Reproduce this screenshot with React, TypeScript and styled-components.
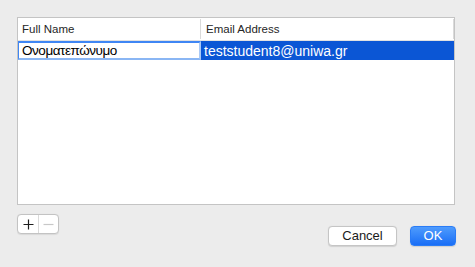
import React from 'react';
import styled, { createGlobalStyle } from 'styled-components';

const GlobalStyle = createGlobalStyle`
  html, body {
    margin: 0;
    padding: 0;
    background: #ececec;
  }
  body {
    font-family: "Liberation Sans", Arial, sans-serif;
    -webkit-font-smoothing: antialiased;
  }
`;

const Sheet = styled.div`
  width: 475px;
  height: 267px;
  box-sizing: border-box;
  padding: 17px 20px 0 17px;
  background: #ececec;
  display: flex;
  flex-direction: column;
`;

const Table = styled.div`
  height: 188px;
  box-sizing: border-box;
  border: 1px solid #c4c4c4;
  background: #ffffff;
  display: flex;
  flex-direction: column;
`;

const HeaderRow = styled.div`
  height: 22px;
  display: grid;
  grid-template-columns: 183px 1fr;
  border-bottom: 1px solid #e2e2e2;
`;

const HeaderCell = styled.div<{ $last?: boolean }>`
  display: flex;
  align-items: center;
  padding-left: ${(p) => (p.$last ? '5px' : '4px')};
  font-size: 11.5px;
  color: #262626;
  border-right: 1px solid #dadada;
  margin: 1px 0;
`;

const DataRow = styled.div`
  height: 18px;
  display: grid;
  grid-template-columns: 183px 1fr;
`;

const EditField = styled.div`
  box-sizing: border-box;
  display: flex;
  align-items: center;
  padding-left: 3px;
  font-size: 13.5px;
  letter-spacing: -0.45px;
  color: #000;
  background: #fff;
  border: 1px solid #3f86f4;
  border-top-width: 2px;
  border-bottom: 2px solid #8ab6f4;
  border-right: 2px solid #a9c9f6;
`;

const SelectedCell = styled.div`
  display: flex;
  align-items: center;
  padding-left: 3px;
  font-size: 14px;
  color: #ffffff;
  background: #0b56d5;
`;

const Footer = styled.div`
  display: flex;
  justify-content: space-between;
  align-items: flex-start;
  padding-top: 9px;
`;

const Segmented = styled.div`
  display: flex;
  height: 20px;
  box-sizing: border-box;
  border: 1px solid #c3c3c3;
  border-radius: 4px;
  background: #ffffff;
  box-shadow: 0 0.5px 1px rgba(0, 0, 0, 0.08);
`;

const SegButton = styled.div<{ $disabled?: boolean }>`
  width: ${(p) => (p.$disabled ? '19px' : '20px')};
  display: flex;
  align-items: center;
  justify-content: center;
  & + & {
    border-left: 1px solid #dadada;
  }
  svg {
    stroke: ${(p) => (p.$disabled ? '#c8c8c8' : '#1e1e1e')};
  }
`;

const Actions = styled.div`
  display: flex;
  gap: 13px;
  padding-top: 12px;
  margin-right: -1px;
`;

const PushButton = styled.button<{ $primary?: boolean }>`
  height: 20px;
  box-sizing: border-box;
  padding: 0;
  width: ${(p) => (p.$primary ? '46px' : '69px')};
  border-radius: 4px;
  font-family: "Liberation Sans", Arial, sans-serif;
  font-size: 13px;
  line-height: 18px;
  color: ${(p) => (p.$primary ? '#ffffff' : '#1a1a1a')};
  border: 1px solid ${(p) => (p.$primary ? '#2a7cf6' : '#c5c5c5')};
  background: ${(p) =>
    p.$primary ? 'linear-gradient(#4e9bfd, #1a6ef6)' : '#ffffff'};
  box-shadow: 0 0.5px 1px rgba(0, 0, 0, 0.12);
`;

const PlusIcon = () => (
  <svg width="11" height="11" viewBox="0 0 11 11" fill="none" strokeWidth="1.2">
    <path d="M5.5 0.5v10M0.5 5.5h10" />
  </svg>
);

const MinusIcon = () => (
  <svg width="11" height="11" viewBox="0 0 11 11" fill="none" strokeWidth="1.2">
    <path d="M0.5 5.5h10" />
  </svg>
);

export default function App() {
  return (
    <>
      <GlobalStyle />
      <Sheet>
        <Table>
          <HeaderRow>
            <HeaderCell>Full Name</HeaderCell>
            <HeaderCell $last>Email Address</HeaderCell>
          </HeaderRow>
          <DataRow>
            <EditField>Ονοματεπώνυμο</EditField>
            <SelectedCell>teststudent8@uniwa.gr</SelectedCell>
          </DataRow>
        </Table>
        <Footer>
          <Segmented>
            <SegButton>
              <PlusIcon />
            </SegButton>
            <SegButton $disabled>
              <MinusIcon />
            </SegButton>
          </Segmented>
          <Actions>
            <PushButton>Cancel</PushButton>
            <PushButton $primary>OK</PushButton>
          </Actions>
        </Footer>
      </Sheet>
    </>
  );
}
